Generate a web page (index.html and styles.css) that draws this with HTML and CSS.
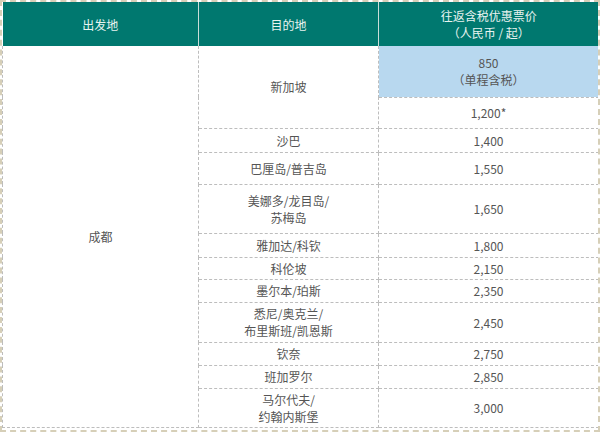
FILE: index.html
```html
<!DOCTYPE html>
<html lang="zh-CN">
<head>
<meta charset="utf-8">
<link rel="stylesheet" href="styles.css">
</head>
<body>
<div class="frame">
<table class="fares">
  <colgroup>
    <col class="c1"><col class="c2"><col class="c3">
  </colgroup>
  <thead>
    <tr class="h-head">
      <th>出发地</th>
      <th>目的地</th>
      <th>往返含税优惠票价<br>（人民币 / 起）</th>
    </tr>
  </thead>
  <tbody>
    <tr class="h51">
      <td rowspan="13">成都</td>
      <td rowspan="2">新加坡</td>
      <td class="hl">850<br>（单程含税）</td>
    </tr>
    <tr class="h31"><td>1,200*</td></tr>
    <tr class="h24"><td>沙巴</td><td>1,400</td></tr>
    <tr class="h32"><td>巴厘岛/普吉岛</td><td>1,550</td></tr>
    <tr class="h49"><td>美娜多/龙目岛/<br>苏梅岛</td><td>1,650</td></tr>
    <tr class="h24"><td>雅加达/科钦</td><td>1,800</td></tr>
    <tr class="h22"><td>科伦坡</td><td>2,150</td></tr>
    <tr class="h23"><td>墨尔本/珀斯</td><td>2,350</td></tr>
    <tr class="h41"><td>悉尼/奥克兰/<br>布里斯班/凯恩斯</td><td>2,450</td></tr>
    <tr class="h23"><td>钦奈</td><td>2,750</td></tr>
    <tr class="h23"><td>班加罗尔</td><td>2,850</td></tr>
    <tr class="h39"><td>马尔代夫/<br>约翰内斯堡</td><td>3,000</td></tr>
  </tbody>
</table>
</div>
</body>
</html>
```

FILE: styles.css
```css
html, body {
  margin: 0;
  padding: 0;
  background: #ffffff;
}
.frame {
  width: 600px;
  height: 432px;
  box-sizing: border-box;
  border: 2px dashed #d6cfb8;
  background: #fff;
  overflow: hidden;
}
.fares {
  border-collapse: collapse;
  table-layout: fixed;
  width: 596px;
  font-family: "Noto Sans CJK SC", "Noto Sans", sans-serif;
  font-size: 12px;
  line-height: 17px;
  color: #555555;
}
.c1 { width: 196px; }
.c2 { width: 180px; }
.c3 { width: 220px; }
.fares th {
  background: #00786f;
  color: #e8f3ef;
  font-weight: normal;
  height: 44px;
  padding: 0;
  text-align: center;
  vertical-align: middle;
  border-left: 1px solid #c9ddd8;
}
.fares th:first-child { border-left: none; }
.fares td {
  padding: 0;
  text-align: center;
  vertical-align: middle;
  border: 1px dashed #bdbdbd;
}
.fares tbody tr:first-child td { border-top: none; }
.fares td.hl {
  background: #b8d8ef;
}
.h51 { height: 51px; }
.h31 { height: 31px; }
.h24 { height: 24px; }
.h32 { height: 32px; }
.h49 { height: 49px; }
.h22 { height: 22px; }
.h23 { height: 23px; }
.h41 { height: 40px; }
.h39 { height: 39px; }
```
